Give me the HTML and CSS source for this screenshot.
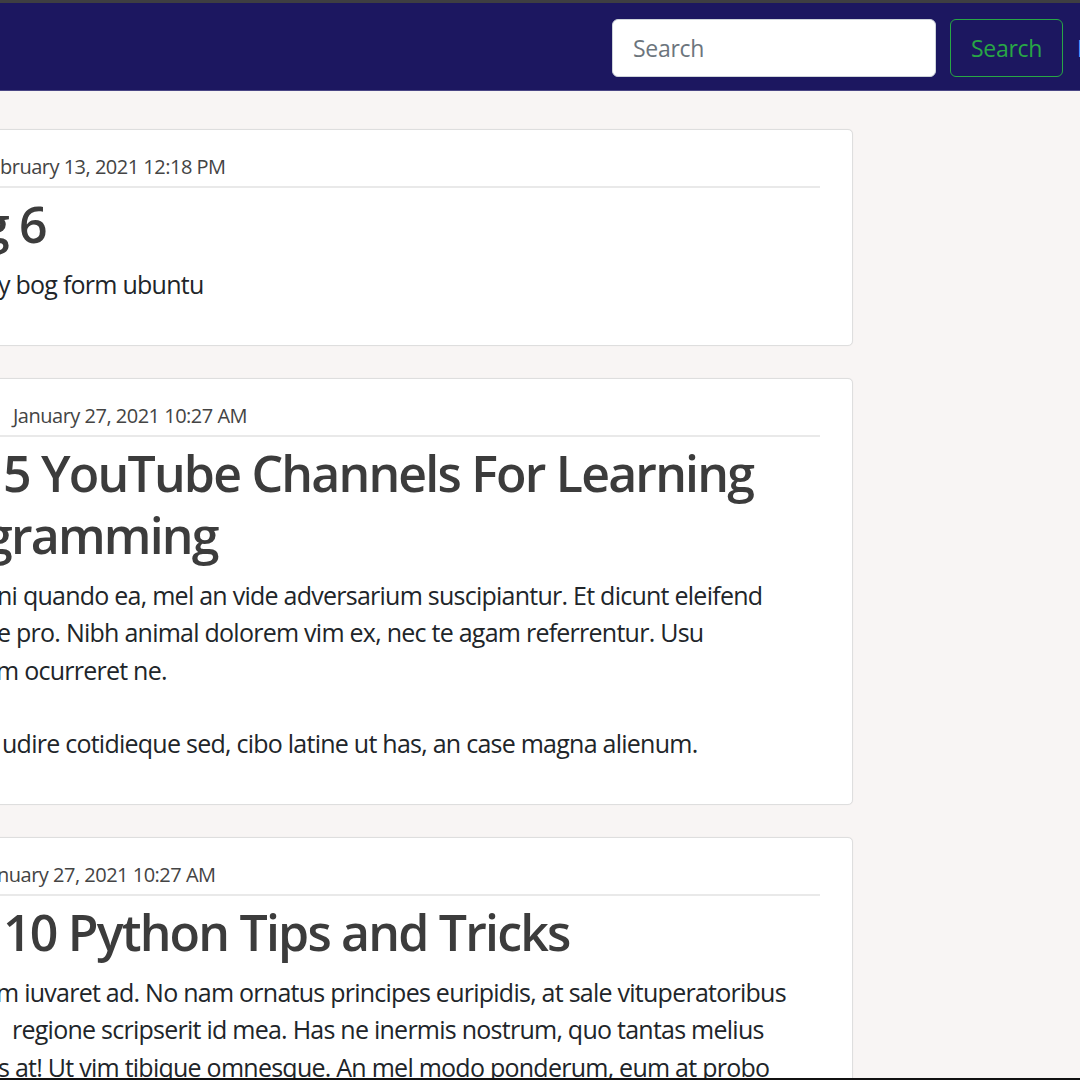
FILE: index.html
```html
<!DOCTYPE html>
<html lang="en">
<head>
<meta charset="utf-8">
<title>Blog</title>
<link rel="stylesheet" href="styles.css">
</head>
<body>
<header class="navbar">
  <form class="nav-form">
    <input class="search-input" type="text" placeholder="Search">
    <button class="search-btn" type="button">Search</button>
  </form>
  <a class="nav-link" href="#">Login</a>
</header>

<main class="feed">
  <article class="card">
    <div class="card-body">
      <div class="meta"><span class="ln">bruary 13, 2021 12:18 PM</span></div>
      <h2 class="title"><span class="ln cut-g">Blog 6</span></h2>
      <div class="text">
        <p><span class="ln cut-y">y bog form ubuntu</span></p>
      </div>
    </div>
  </article>

  <article class="card">
    <div class="card-body">
      <div class="meta"><span class="ln in-13">January 27, 2021 10:27 AM</span></div>
      <h2 class="title">
        <span class="ln in-3">5 YouTube Channels For Learning</span>
        <span class="ln cut-pro">gramming</span>
      </h2>
      <div class="text">
        <p>
          <span class="ln cut-n">ni quando ea, mel an vide adversarium suscipiantur. Et dicunt eleifend</span>
          <span class="ln cut-e">e pro. Nibh animal dolorem vim ex, nec te agam referrentur. Usu</span>
          <span class="ln cut-m">m ocurreret ne.</span>
        </p>
        <p><span class="ln in-2">udire cotidieque sed, cibo latine ut has, an case magna alienum.</span></p>
      </div>
    </div>
  </article>

  <article class="card">
    <div class="card-body">
      <div class="meta"><span class="ln cut-n">nuary 27, 2021 10:27 AM</span></div>
      <h2 class="title"><span class="ln in-3">10 Python Tips and Tricks</span></h2>
      <div class="text">
        <p>
          <span class="ln cut-m">m iuvaret ad. No nam ornatus principes euripidis, at sale vituperatoribus</span>
          <span class="ln in-12">regione scripserit id mea. Has ne inermis nostrum, quo tantas melius</span>
          <span class="ln cut-s">s at! Ut vim tibique omnesque. An mel modo ponderum, eum at probo</span>
        </p>
      </div>
    </div>
  </article>
</main>
<div class="window-edge"></div>
</body>
</html>
```
FILE: styles.css
```css
html, body {
  margin: 0;
  padding: 0;
}
body {
  background: #f8f5f4;
  font-family: "Open Sans", "Noto Sans", sans-serif;
  color: #212529;
  overflow: hidden;
  height: 1080px;
}
.navbar {
  box-sizing: border-box;
  height: 91px;
  background: #1c1760;
  border-top: 3px solid #3e3e42;
  border-bottom: 1px solid #4a4684;
  display: flex;
  align-items: center;
  justify-content: flex-end;
  padding-top: 2px;
}
.nav-form {
  display: flex;
  align-items: center;
  gap: 14px;
  margin: 0;
}
.search-input {
  box-sizing: border-box;
  width: 324px;
  height: 58px;
  border: 1px solid #ced4da;
  border-radius: 6px;
  background: #fff;
  padding: 0 20px;
  font-family: "Open Sans", sans-serif;
  font-size: 23px;
  letter-spacing: -0.3px;
  color: #495057;
  outline: none;
}
.search-input::placeholder {
  color: #6c757d;
}
.search-btn {
  box-sizing: border-box;
  width: 113px;
  height: 58px;
  border: 1px solid #28a745;
  border-radius: 6px;
  background: transparent;
  color: #28a745;
  font-family: "Open Sans", sans-serif;
  font-size: 23px;
  letter-spacing: -0.3px;
  padding: 0;
}
.nav-link {
  width: 80px;
  margin-left: 14px;
  margin-right: -77px;
  color: #6ea8fe;
  font-size: 23px;
  text-decoration: none;
}
.feed {
  margin-left: -40px;
  width: 893px;
  padding-top: 38px;
  display: flex;
  flex-direction: column;
  gap: 32px;
}
.card {
  background: #fff;
  border: 1px solid #dedede;
  border-radius: 5px;
  box-shadow: 0 0 1px rgba(0, 0, 0, 0.08);
}
.card-body {
  padding: 22px 32px 41px 39px;
  overflow: hidden;
}
.meta {
  font-size: 20px;
  line-height: 30px;
  letter-spacing: -0.5px;
  color: #444;
  padding-bottom: 4px;
  border-bottom: 2px solid #e9e9e9;
}
.title {
  margin: 5px 0 11px;
  font-size: 50px;
  line-height: 62px;
  font-weight: 600;
  letter-spacing: -1.8px;
  color: #3c3c3c;
}
.text p {
  margin: 0;
  font-size: 25px;
  line-height: 37.5px;
  letter-spacing: -0.75px;
}
.text p + p {
  margin-top: 36px;
}
.ln {
  display: block;
  white-space: nowrap;
}
.in-2 { text-indent: 2px; }
.in-3 { text-indent: 3px; }
.in-12 { text-indent: 12px; }
.in-13 { text-indent: 13px; }
.cut-g { text-indent: -90px; }
.cut-pro { text-indent: -15px; }
.cut-y { text-indent: -2px; }
.cut-n { text-indent: -3px; }
.cut-e { text-indent: -3px; }
.cut-m { text-indent: -4px; }
.cut-s { text-indent: -2px; }
.window-edge {
  position: fixed;
  left: 0;
  right: 0;
  bottom: 0;
  height: 2px;
  background: #111;
}
```
